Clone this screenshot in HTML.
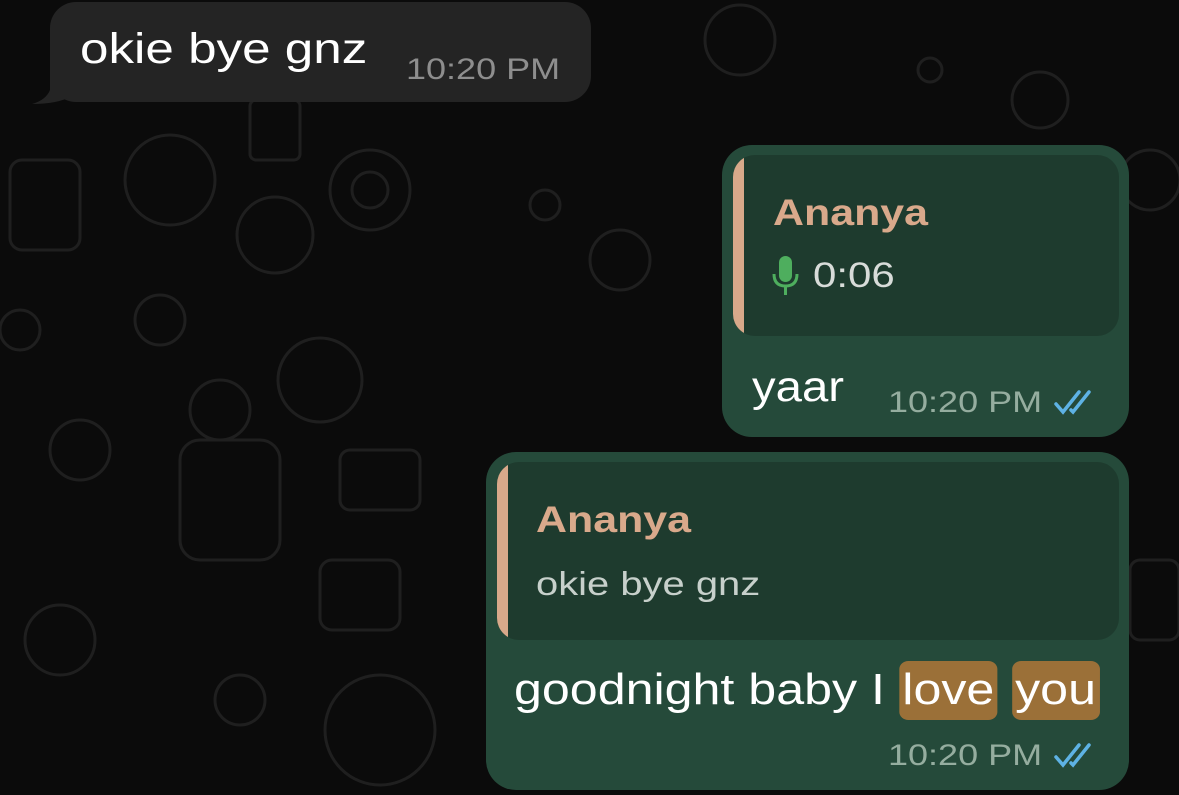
<!DOCTYPE html>
<html><head><meta charset="utf-8"><style>
body{margin:0;width:1179px;height:795px;background:#0b0b0b;overflow:hidden;position:relative;font-family:"Liberation Sans",sans-serif}
.a{position:absolute;transform-origin:0 50%}
.b{border-radius:30px}
.t{color:#fff;white-space:nowrap}
.tm{color:#95ad9f;font-size:30px;white-space:nowrap;transform:scaleX(1.2)}
.q{background:#1e3b2e;border-radius:22px;overflow:hidden}
.bar{position:absolute;left:0;top:0;bottom:0;width:11px;background:#d8a98a}
.n{color:#d9a98b;font-weight:bold;font-size:37px;transform:scaleX(1.16)}
.hl{background:#9b7038;border-radius:8px}
</style></head><body>
<svg class="a" style="left:0;top:0" width="1179" height="795" stroke="#1f1f1f" stroke-width="3" fill="none">
<circle cx="370" cy="190" r="40"/><circle cx="370" cy="190" r="18"/><circle cx="275" cy="235" r="38"/><circle cx="320" cy="380" r="42"/><circle cx="160" cy="320" r="25"/><circle cx="80" cy="450" r="30"/><circle cx="545" cy="205" r="15"/><circle cx="740" cy="40" r="35"/><circle cx="930" cy="70" r="12"/><circle cx="1040" cy="100" r="28"/><circle cx="20" cy="330" r="20"/><circle cx="380" cy="730" r="55"/><circle cx="170" cy="180" r="45"/><rect x="10" y="160" width="70" height="90" rx="12"/><rect x="340" y="450" width="80" height="60" rx="10"/><rect x="250" y="100" width="50" height="60" rx="6"/><circle cx="220" cy="410" r="30"/><rect x="180" y="440" width="100" height="120" rx="20"/><circle cx="1150" cy="180" r="30"/><rect x="1130" y="560" width="49" height="80" rx="10"/><circle cx="60" cy="640" r="35"/><rect x="320" y="560" width="80" height="70" rx="12"/><circle cx="620" cy="260" r="30"/><circle cx="240" cy="700" r="25"/></svg>
<div class="a b" style="left:50px;top:2px;width:541px;height:100px;background:#242424;border-radius:26px"></div>
<svg class="a" style="left:28px;top:70px" width="50" height="36"><path d="M22 0 L22 20 Q18 30 4 34 Q30 34 44 26 L44 0Z" fill="#242424"/></svg>
<div class="a t" style="left:80px;top:25px;font-size:43px;transform:scaleX(1.19)">okie bye gnz</div>
<div class="a" style="left:406px;top:53px;font-size:30px;color:#8e8e8e;transform:scaleX(1.2);white-space:nowrap">10:20 PM</div>

<div class="a b" style="left:722px;top:145px;width:407px;height:292px;background:#254a3a"></div>
<div class="a q" style="left:733px;top:155px;width:386px;height:181px"><div class="bar"></div></div>
<div class="a n" style="left:773px;top:192px">Ananya</div>
<svg class="a" style="left:771px;top:254px" width="32" height="44"><rect x="8" y="2" width="13" height="26" rx="6.5" fill="#4eae5e"/><path d="M3 20 Q3 32 14.5 32 Q26 32 26 20" stroke="#4eae5e" stroke-width="3" fill="none"/><path d="M14.5 32 V41" stroke="#4eae5e" stroke-width="3"/></svg>
<div class="a" style="left:813px;top:256px;font-size:35px;color:#d8dcd9;transform:scaleX(1.2)">0:06</div>
<div class="a t" style="left:752px;top:363px;font-size:43px;transform:scaleX(1.1)">yaar</div>
<div class="a tm" style="left:888px;top:386px">10:20 PM</div>
<svg class="a" style="left:1053px;top:388px" width="48" height="28" stroke="#5eb2e4" stroke-width="3.5" fill="none" stroke-linecap="round"><path d="M3 16 L10 24 L26 4"/><path d="M18 22 L20 24 L36 4"/></svg>

<div class="a b" style="left:486px;top:452px;width:643px;height:338px;background:#254a3a"></div>
<div class="a q" style="left:497px;top:462px;width:622px;height:178px"><div class="bar"></div></div>
<div class="a n" style="left:536px;top:499px">Ananya</div>
<div class="a" style="left:536px;top:565px;font-size:33px;color:#c7d0cb;transform:scaleX(1.21);white-space:nowrap">okie bye gnz</div>
<div class="a t" style="left:514px;top:664px;font-size:44px;line-height:52px;transform:scaleX(1.14)">goodnight baby I <span class="hl" style="padding:4px 3px 6px">love</span> <span class="hl" style="padding:4px 3px 6px">you</span></div>
<div class="a tm" style="left:888px;top:739px">10:20 PM</div>
<svg class="a" style="left:1053px;top:741px" width="48" height="28" stroke="#5eb2e4" stroke-width="3.5" fill="none" stroke-linecap="round"><path d="M3 16 L10 24 L26 4"/><path d="M18 22 L20 24 L36 4"/></svg>
</body></html>
